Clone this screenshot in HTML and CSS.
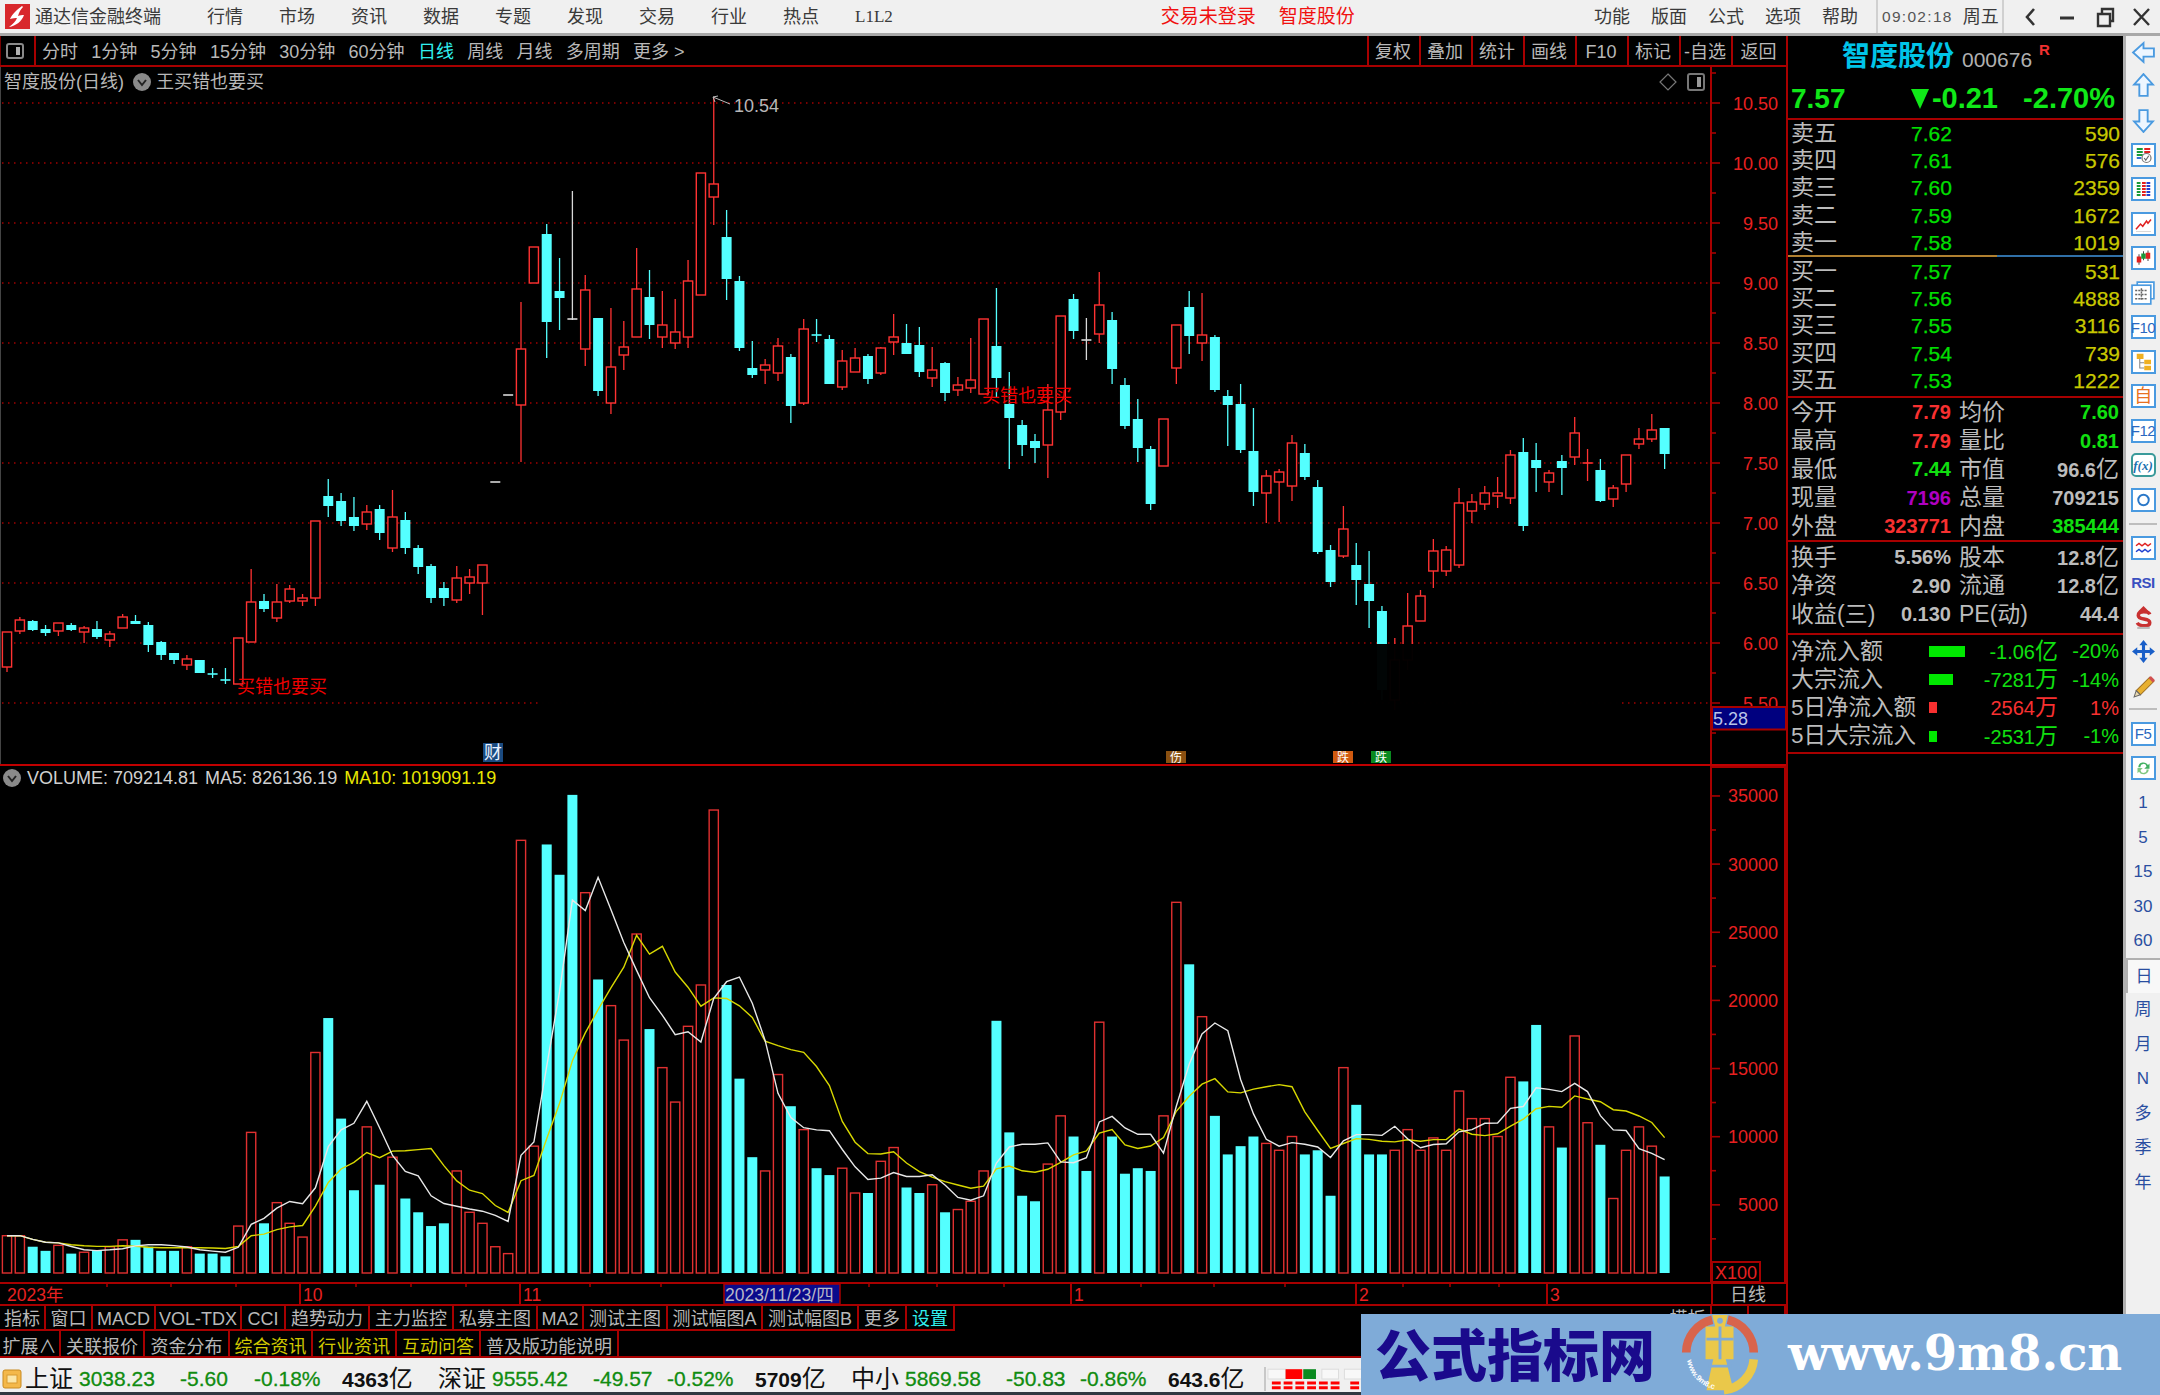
FILE: index.html
```html
<!DOCTYPE html>
<html lang="zh-CN">
<head>
<meta charset="utf-8">
<title>通达信金融终端</title>
<link rel="stylesheet" href="styles.css">
</head>
<body>
<div class="app">
  <header class="menubar">
    <svg class="logo" viewBox="0 0 25 25"><rect width="25" height="25" fill="#d8282c"/><path d="M17 2C13 5 7 10 5 15c3-1 5-1 7-1-1 3-4 6-8 9 7-1 13-6 15-12-2 0-4 0-6 1 1-4 3-7 5-9z" fill="#fff"/></svg>
    <span class="apptitle">通达信金融终端</span>
    <nav class="menu">
      <span>行情</span><span>市场</span><span>资讯</span><span>数据</span><span>专题</span><span>发现</span><span>交易</span><span>行业</span><span>热点</span><span class="l1">L1L2</span>
    </nav>
    <span class="alert first">交易未登录</span>
    <span class="alert">智度股份</span>
    <nav class="menu right">
      <span>功能</span><span>版面</span><span>公式</span><span>选项</span><span>帮助</span>
    </nav>
    <div class="clock"><span class="time">09:02:18</span><span>周五</span></div>
    <div class="winbtns">
      <svg viewBox="0 0 37 30"><path d="M22 7l-7 8 7 8" fill="none" stroke="#333" stroke-width="2.6"/></svg>
      <svg viewBox="0 0 37 30"><path d="M11 16h14" stroke="#333" stroke-width="3"/></svg>
      <svg viewBox="0 0 37 30"><path d="M12 12h12v12H12zM16 12V7h11v12h-3" fill="none" stroke="#333" stroke-width="2.4"/></svg>
      <svg viewBox="0 0 37 30"><path d="M11 7l15 16M26 7L11 23" fill="none" stroke="#333" stroke-width="2.4"/></svg>
    </div>
  </header>

  <div class="work">
    <main class="main">
      <div class="toolbar">
        <div class="tb-icon"><svg viewBox="0 0 18 18"><rect x="1" y="2" width="16" height="14" rx="2" fill="none" stroke="#8a8a8a" stroke-width="2"/><rect x="10" y="5" width="4" height="8" fill="#b0b0b0"/></svg></div>
        <div class="periods">
          <span>分时</span><span>1分钟</span><span>5分钟</span><span>15分钟</span><span>30分钟</span><span>60分钟</span><span class="on">日线</span><span>周线</span><span>月线</span><span>多周期</span><span>更多 &gt;</span>
        </div>
        <div class="tools">
          <span>复权</span><span>叠加</span><span>统计</span><span>画线</span><span>F10</span><span>标记</span><span>-自选</span><span class="last">返回</span>
        </div>
      </div>

      <section class="pane pricepane">
        <svg id="priceChart" class="chart" viewBox="0 67 1786 697"></svg>
        <div class="panehead">
          <span>智度股份(日线)</span>
          <i class="chev"><svg viewBox="0 0 18 18"><circle cx="9" cy="9" r="9" fill="#8a8a8a"/><path d="M5 7l4 5 4-5" fill="none" stroke="#222" stroke-width="2"/></svg></i>
          <span>王买错也要买</span>
        </div>
        <div class="paneicons">
          <svg viewBox="0 0 18 18"><path d="M9 1l8 8-8 8-8-8z" fill="none" stroke="#777" stroke-width="1.2"/></svg>
          <svg viewBox="0 0 18 18"><rect x="1" y="1" width="16" height="16" rx="2" fill="none" stroke="#777" stroke-width="2"/><rect x="10" y="4" width="4" height="10" fill="#999"/></svg>
        </div>
      </section>

      <section class="pane volpane">
        <svg id="volChart" class="chart" viewBox="0 766 1786 516"></svg>
        <div class="volhead">
          <i class="chev small"><svg viewBox="0 0 18 18"><circle cx="9" cy="9" r="9" fill="#8a8a8a"/><path d="M5 7l4 5 4-5" fill="none" stroke="#222" stroke-width="2"/></svg></i>
          <span>VOLUME: 709214.81</span>
          <span>MA5: 826136.19</span>
          <span class="ma10">MA10: 1019091.19</span>
        </div>
      </section>

      <div class="dateaxis">
        <svg id="dateChart" class="datesvg" viewBox="0 1284 1711 20"></svg>
        <span class="datecell">日线</span>
      </div>

      <div class="tabrow rowa">
        <div class="tabs tabs-a">
          <span>指标</span><span>窗口</span><span>MACD</span><span>VOL-TDX</span><span>CCI</span><span>趋势动力</span><span>主力监控</span><span>私募主图</span><span>MA2</span><span>测试主图</span><span>测试幅图A</span><span>测试幅图B</span><span>更多</span><span class="set">设置</span>
        </div>
        <div class="tabs tabs-r"><span>模板</span><span>+</span><span>-</span></div>
      </div>
      <div class="tabrow rowb">
        <div class="tabs tabs-b">
          <span>扩展∧</span><span>关联报价</span><span>资金分布</span><span class="gold">综合资讯</span><span class="gold">行业资讯</span><span class="gold">互动问答</span><span>普及版功能说明</span>
        </div>
      </div>
    </main>

    <aside class="quote">
      <div class="q-title"><span class="q-name">智度股份</span><span class="q-code">000676</span><sup class="q-r">R</sup></div>
      <div class="q-price">
        <span class="q-last">7.57</span>
        <span class="q-tri"></span>
        <span class="q-chg">-0.21</span>
        <span class="q-pct">-2.70%</span>
      </div>
      <div class="book">
        <div class="brow"><span>卖五</span><b>7.62</b><em>590</em></div>
        <div class="brow"><span>卖四</span><b>7.61</b><em>576</em></div>
        <div class="brow"><span>卖三</span><b>7.60</b><em>2359</em></div>
        <div class="brow"><span>卖二</span><b>7.59</b><em>1672</em></div>
        <div class="brow"><span>卖一</span><b>7.58</b><em>1019</em></div>
      </div>
      <div class="bookline"></div>
      <div class="book buy">
        <div class="brow"><span>买一</span><b>7.57</b><em>531</em></div>
        <div class="brow"><span>买二</span><b>7.56</b><em>4888</em></div>
        <div class="brow"><span>买三</span><b>7.55</b><em>3116</em></div>
        <div class="brow"><span>买四</span><b>7.54</b><em>739</em></div>
        <div class="brow"><span>买五</span><b>7.53</b><em>1222</em></div>
      </div>
      <div class="stats s-a">
        <div class="srow"><div class="pair"><span>今开</span><b class="up">7.79</b></div><div class="pair"><span>均价</span><b class="dn">7.60</b></div></div>
        <div class="srow"><div class="pair"><span>最高</span><b class="up">7.79</b></div><div class="pair"><span>量比</span><b class="dn">0.81</b></div></div>
        <div class="srow"><div class="pair"><span>最低</span><b class="dn">7.44</b></div><div class="pair"><span>市值</span><b class="ne">96.6<u>亿</u></b></div></div>
        <div class="srow"><div class="pair"><span>现量</span><b class="pu">7196</b></div><div class="pair"><span>总量</span><b class="ne">709215</b></div></div>
        <div class="srow"><div class="pair"><span>外盘</span><b class="up">323771</b></div><div class="pair"><span>内盘</span><b class="dn">385444</b></div></div>
      </div>
      <div class="stats s-b">
        <div class="srow"><div class="pair"><span>换手</span><b class="ne">5.56%</b></div><div class="pair"><span>股本</span><b class="ne">12.8<u>亿</u></b></div></div>
        <div class="srow"><div class="pair"><span>净资</span><b class="ne">2.90</b></div><div class="pair"><span>流通</span><b class="ne">12.8<u>亿</u></b></div></div>
        <div class="srow"><div class="pair"><span>收益(三)</span><b class="ne">0.130</b></div><div class="pair"><span>PE(动)</span><b class="ne">44.4</b></div></div>
      </div>
      <div class="flows">
        <div class="frow"><span>净流入额</span><i class="bar g" style="width:36px"></i><b class="dn">-1.06<u>亿</u></b><em class="dn">-20%</em></div>
        <div class="frow"><span>大宗流入</span><i class="bar g" style="width:24px"></i><b class="dn">-7281<u>万</u></b><em class="dn">-14%</em></div>
        <div class="frow"><span class="tight">5日净流入额</span><i class="bar r" style="width:8px"></i><b class="up">2564<u>万</u></b><em class="up">1%</em></div>
        <div class="frow"><span class="tight">5日大宗流入</span><i class="bar g" style="width:8px"></i><b class="dn">-2531<u>万</u></b><em class="dn">-1%</em></div>
      </div>
    </aside>

    <nav class="side">
      <div class="si"><svg class="ar" viewBox="0 0 24 24"><path d="M2 12l10-9v5h10v8H12v5z" fill="#eef6ff" stroke="#4a9ae0" stroke-width="1.8"/></svg></div>
      <div class="si"><svg class="ar" viewBox="0 0 24 24"><path d="M12 1l9 10h-5v11H8V11H3z" fill="#eef6ff" stroke="#4a9ae0" stroke-width="1.8"/></svg></div>
      <div class="si"><svg class="ar" viewBox="0 0 24 24"><path d="M12 23l9-10h-5V2H8v11H3z" fill="#eef6ff" stroke="#4a9ae0" stroke-width="1.8"/></svg></div>
      <div class="si"><svg class="bx" viewBox="0 0 24 24"><path d="M3 4h8M3 8h8M3 12h8" stroke="#1a9a3a" stroke-width="2.400"/><path d="M13 4h8M13 8h8" stroke="#e02020" stroke-width="2.400"/><path d="M3 16h6" stroke="#2060d0" stroke-width="2.400"/><circle cx="16" cy="16" r="6" fill="#fff" stroke="#777" stroke-width="1.6"/><path d="M13 16l2 3 4-6" fill="none" stroke="#666" stroke-width="1.6"/></svg></div>
      <div class="si"><svg class="bx" viewBox="0 0 24 24"><path d="M3 4h5M3 8h5M3 12h5M3 16h5M3 20h5" stroke="#1a9a3a" stroke-width="2.400"/><path d="M10 4h5M10 8h5M10 12h5M10 16h5M10 20h5" stroke="#e02020" stroke-width="2.400"/><path d="M16 4h5M16 8h5M16 12h5M16 16h5M16 20h5" stroke="#2040d0" stroke-width="2.400"/></svg></div>
      <div class="si"><svg class="bx" viewBox="0 0 24 24"><path d="M2 19l6-7 3 3 5-7 2 3 4-5" fill="none" stroke="#e02020" stroke-width="2"/><path d="M2 22h20" stroke="#ccc" stroke-width="1"/></svg></div>
      <div class="si"><svg class="bx" viewBox="0 0 24 24"><path d="M6 7v14M12 3v12M18 2v14" stroke="#333" stroke-width="1.200"/><rect x="3" y="10" width="6" height="8" fill="#e02020"/><rect x="9" y="6" width="6" height="7" fill="#1a9a3a"/><rect x="15" y="5" width="6" height="8" fill="#e02020"/></svg></div>
      <div class="si"><svg class="ar" viewBox="0 0 24 24"><path d="M6 5V2h16v16h-3" fill="#fff" stroke="#4a9ae0" stroke-width="1.6"/><rect x="1" y="5" width="18" height="18" fill="#fff" stroke="#4a9ae0" stroke-width="1.6"/><path d="M4 10h12M4 14h12M4 18h12M10 8v12" stroke="#666" stroke-width="1.4" stroke-dasharray="2 1"/></svg></div>
      <div class="si"><span class="bx txt">F10</span></div>
      <div class="si"><svg class="bx" viewBox="0 0 24 24"><path d="M7 7v13h6M7 13h6" fill="none" stroke="#888" stroke-width="1.4"/><rect x="3" y="1" width="9" height="7" fill="#f0b020"/><rect x="13" y="9" width="9" height="6" fill="#f0b020"/><rect x="13" y="17" width="9" height="6" fill="#f0b020"/></svg></div>
      <div class="si"><span class="bx txt zi">自</span></div>
      <div class="si"><span class="bx txt">F12</span></div>
      <div class="si"><span class="bx fx">f(x)</span></div>
      <div class="si"><svg class="bx" viewBox="0 0 24 24"><circle cx="12" cy="12" r="7" fill="none" stroke="#2a78c8" stroke-width="2.600"/></svg></div>
      <hr class="sep">
      <div class="si"><svg class="bx" viewBox="0 0 24 24"><path d="M2 9l4-3 4 3 4-3 4 3 4-3" fill="none" stroke="#e02020" stroke-width="2"/><path d="M2 17l4-3 4 3 4-3 4 3 4-3" fill="none" stroke="#2040d0" stroke-width="2"/></svg></div>
      <div class="si rsi">RSI</div>
      <div class="si"><svg class="ar" viewBox="0 0 24 24"><path d="M18 9c-1-3-11-4-11 1 0 5 11 2 11 7 0 4-10 4-12 0" fill="none" stroke="#c83030" stroke-width="3.4"/><path d="M12 1l5 5H7z" fill="#c83030"/><path d="M6 22h12" stroke="#bbb" stroke-width="2"/></svg></div>
      <div class="si"><svg class="ar" viewBox="0 0 24 24"><path d="M12 1l4 5h-2.500v4.500H18V8l5 4-5 4v-2.500h-4.500V18H16l-4 5-4-5h2.500v-4.500H6V16l-5-4 5-4v2.500h4.500V6H8z" fill="#1a5fc8"/></svg></div>
      <div class="si"><svg class="ar" viewBox="0 0 24 24"><path d="M5 16L18 3l4 4L9 20z" fill="#e8b030" stroke="#a07020" stroke-width="1"/><path d="M5 16l4 4-6 2z" fill="#e8d8b0" stroke="#666" stroke-width="1"/><path d="M18 3l4 4" stroke="#d05050" stroke-width="3"/></svg></div>
      <hr class="sep two">
      <div class="si"><span class="bx txt">F5</span></div>
      <div class="si"><svg class="bx" viewBox="0 0 24 24"><path d="M5 11a7 7 0 0 1 13-3l2-2v7h-7l3-3a4 4 0 0 0-8 1z" fill="#40b060"/><path d="M19 14a7 7 0 0 1-13 3l-2 2v-7h7l-3 3a4 4 0 0 0 8-1z" fill="#80c880"/></svg></div>
      <div class="sn">1</div><div class="sn">5</div><div class="sn">15</div><div class="sn">30</div><div class="sn">60</div>
      <div class="sn day">日</div>
      <div class="sn">周</div><div class="sn">月</div><div class="sn">N</div><div class="sn">多</div><div class="sn">季</div><div class="sn">年</div>
    </nav>
  </div>

  <footer class="status">
    <svg class="st-icon" viewBox="0 0 20 20"><rect x="1" y="1" width="18" height="18" rx="2" fill="#f4b84a" stroke="#c88a20"/><rect x="5" y="6" width="10" height="8" fill="#fbe6a8" stroke="#d89a30"/></svg>
    <div class="idx"><span class="nm">上证</span><b>3038.23</b><b>-5.60</b><b>-0.18%</b><strong>4363<u>亿</u></strong></div>
    <div class="idx"><span class="nm">深证</span><b>9555.42</b><b>-49.57</b><b>-0.52%</b><strong>5709<u>亿</u></strong></div>
    <div class="idx"><span class="nm">中小</span><b>5869.58</b><b>-50.83</b><b>-0.86%</b><strong>643.6<u>亿</u></strong></div>
    <svg class="st-meter" viewBox="0 0 100 24">
      <rect x="2" y="2" width="18" height="10" fill="#f8f8f8" stroke="#ddd"/><rect x="20" y="2" width="17" height="10" fill="#f00"/><rect x="38" y="2" width="13" height="10" fill="#0a8a20"/><rect x="57" y="2" width="17" height="10" fill="#f8f8f8" stroke="#ddd"/><rect x="80" y="2" width="18" height="10" fill="#f8f8f8" stroke="#ddd"/>
      <path d="M6 16h70M86 16h14M6 21h70M86 21h14" stroke="#f00" stroke-width="3" stroke-dasharray="9 3"/>
    </svg>
  </footer>

  <div class="watermark">
    <span class="wm-cn">公式指标网</span>
    <svg class="wm-logo" viewBox="0 0 84 84">
      <defs><path id="wmarc" d="M8 48 A36 36 0 0 0 36 78"/></defs>
      <path d="M7 40A35 35 0 0 1 34 6" fill="none" stroke="#d8644c" stroke-width="9"/>
      <path d="M50 6A35 35 0 0 1 77 40" fill="none" stroke="#d8644c" stroke-width="9"/>
      <path d="M77 47A35 35 0 0 1 46 79" fill="none" stroke="#eac84a" stroke-width="9"/>
      <path d="M34 1h16l-3 12h9v34h-8l8 32H28l7-32h-8V13h10z" fill="#eac84a"/>
      <path d="M28 26h28M42 13v34M30 54h24" stroke="#7fabd8" stroke-width="3"/>
      <circle cx="42" cy="7" r="3" fill="#7fabd8"/>
      <text class="wm-arc"><textPath href="#wmarc">www.9m8.cn</textPath></text>
    </svg>
    <span class="wm-url">www.9m8.cn</span>
  </div>
</div>
<script src="chart.js"></script>
</body>
</html>
```
FILE: styles.css
```css
* { box-sizing: border-box; margin: 0; padding: 0; }
html, body { width: 2160px; height: 1395px; background: #000; overflow: hidden; }
body { font-family: "Liberation Sans", "Noto Sans CJK SC", sans-serif; font-size: 18px; line-height: 1; }
i, em, u, b { font-style: normal; text-decoration: none; }

.app { position: relative; width: 2160px; height: 1395px; display: flex; flex-direction: column; overflow: hidden; }

/* menu bar */
.menubar { height: 36px; flex: none; display: flex; align-items: center; background: #f0f0f0; border-bottom: 3px solid #a8a8a8; color: #3a3a3a; padding-left: 5px; }
.logo { width: 25px; height: 25px; flex: none; }
.apptitle { margin-left: 5px; width: 126px; }
.menu { display: flex; gap: 36px; margin-left: 46px; }
.menu .l1 { font-family: "Liberation Serif", serif; font-size: 17px; }
.menu.right { margin-left: auto; gap: 21px; margin-right: 18px; }
.alert { color: #f01010; font-size: 19px; white-space: nowrap; }
.alert.first { margin-left: 268px; margin-right: 23px; }
.clock { width: 128px; height: 33px; flex: none; display: flex; align-items: center; gap: 10px; padding-left: 4px; border-left: 2px solid #d0d0d0; border-right: 2px solid #d0d0d0; white-space: nowrap; }
.time { font-size: 15.500px; letter-spacing: 1.300px; color: #555; }
.winbtns { display: flex; margin-left: 8px; }
.winbtns svg { width: 37px; height: 30px; }

/* layout */
.work { flex: none; height: 1322px; display: flex; background: #000; }
.main { width: 1786px; flex: none; display: flex; flex-direction: column; }

/* toolbar */
.toolbar { height: 31px; flex: none; display: flex; align-items: stretch; border-bottom: 2px solid #a80000; color: #b8b8b8; }
.tb-icon { width: 36px; flex: none; display: flex; align-items: center; justify-content: center; border-right: 2px solid #a80000; border-left: 1px solid #700; padding-right: 6px; }
.tb-icon svg { width: 18px; height: 18px; }
.periods { display: flex; align-items: center; gap: 13.300px; padding: 2px 0 0 6px; }
.periods .on { color: #30f0f0; }
.tools { margin-left: auto; display: flex; }
.tools span { width: 52px; display: flex; align-items: center; justify-content: center; border-left: 2px solid #a80000; padding: 2px 2px 0 0; }
.tools .last { width: 55px; }

/* panes */
.pane { position: relative; flex: none; }
.chart { display: block; width: 1786px; height: 100%; }
.pricepane { height: 699px; border-bottom: 2px solid #c00000; }
.volpane { height: 516px; }
.panehead { position: absolute; left: 4px; top: 6px; display: flex; align-items: center; gap: 5px; color: #b8b8b8; }
.chev { display: block; width: 18px; height: 18px; margin-left: 4px; }
.chev.small { margin-left: 0; }
.chev svg { display: block; width: 100%; height: 100%; }
.paneicons { position: absolute; left: 1659px; top: 6px; display: flex; gap: 10px; }
.paneicons svg { width: 18px; height: 18px; display: block; }
.volhead { position: absolute; left: 3px; top: 3px; display: flex; align-items: center; gap: 7px; color: #d0d0d0; font-size: 18px; }
.volhead .chev { margin-right: -1px; }
.ma10 { color: #e8e800; }

/* date axis */
.dateaxis { flex: none; height: 24px; display: flex; border-top: 2px solid #a80000; border-bottom: 2px solid #a80000; }
.datesvg { display: block; width: 1711px; height: 20px; flex: none; overflow: visible; }
.datecell { width: 75px; border-left: 2px solid #a80000; color: #b8b8b8; display: flex; align-items: center; justify-content: center; padding: 2px 3px 0 0; }

/* tabs */
.tabrow { flex: none; display: flex; justify-content: space-between; }
.rowa { height: 25px; }
.rowb { height: 27px; border-bottom: 2px solid #a80000; }
.tabs { display: grid; color: #b8b8b8; }
.tabs span { display: flex; align-items: center; justify-content: center; border-right: 2px solid #a80000; border-bottom: 2px solid #a80000; white-space: nowrap; padding-top: 3px; }
.rowb .tabs span { border-bottom: 0; padding-top: 7px; }
.tabs-a { grid-template-columns: 46px 47px 63px 86px 44px 84px 84px 84px 46px 84px 95px 96px 48px 48px; }
.tabs-b { grid-template-columns: 61px 84px 85px 83px 84px 84px 138px; }
.tabs-r { grid-template-columns: 47px 37px 37px; margin-right: 0; }
.tabs .set { color: #30f0f0; }
.tabs .gold { color: #d0c800; }

/* quote */
.quote { width: 337px; flex: none; border-left: 2px solid #a80000; color: #bcbcbc; display: flex; flex-direction: column; padding-left: 3px; }
.quote > * { margin-left: -3px; padding-left: 3px; }
.q-title { height: 49px; flex: none; display: flex; align-items: flex-start; padding-left: 54px !important; }
.q-name { margin-top: 3px; font-size: 28px; line-height: 36px; color: #00c4e8; font-weight: 700; }
.q-code { margin: 13px 0 0 8px; font-size: 21px; color: #b0b0b0; }
.q-r { margin: 6px 0 0 7px; font-size: 15px; font-weight: 700; color: #f03030; }
.q-price { height: 35px; flex: none; border-bottom: 2px solid #a80000; display: flex; align-items: center; color: #10e818; font-weight: 700; font-size: 29px; padding-bottom: 6px; }
.q-last { width: 120px; font-size: 28px; }
.q-tri { width: 0; height: 0; border-left: 9px solid transparent; border-right: 9px solid transparent; border-top: 20px solid #10e818; }
.q-chg { width: 69px; text-align: right; }
.q-pct { width: 117px; text-align: right; }
.book { flex: none; height: 135px; }
.buy { height: 141px; border-bottom: 2px solid #a80000; padding-top: 1px; }
.brow { height: 27.200px; display: grid; grid-template-columns: 120px 1fr 120px; align-items: center; padding-right: 3px; font-size: 23px; }
.brow b { font-weight: 400; font-size: 21px; color: #00e000; -webkit-text-stroke: .25px #00e000; }
.brow em { font-size: 21px; color: #c8c800; text-align: right; -webkit-text-stroke: .25px #c8c800; }
.bookline { flex: none; height: 2px; margin-left: -3px; padding: 0; background: linear-gradient(90deg, #b08030 0 62.500%, #3070a8 62.500% 100%); }

.stats { flex: none; border-bottom: 2px solid #a80000; padding-right: 3px; }
.s-a { height: 144px; }
.s-b { height: 93px; padding-top: 1px; }
.srow { height: 28.500px; display: flex; gap: 8px; }
.pair { width: 160px; display: flex; justify-content: space-between; align-items: center; font-size: 23px; white-space: nowrap; }
.pair b { font-size: 20px; font-weight: 700; }
.pair b u, .frow b u { font-size: 23px; font-weight: 400; }
.up { color: #f83030; }
.dn { color: #10e010; }
.ne { color: #bcbcbc; }
.pu { color: #b000c0; }

.flows { flex: none; height: 119px; border-bottom: 2px solid #a80000; padding-top: 2px; padding-right: 3px; }
.frow { height: 28.400px; display: grid; grid-template-columns: 138px 40px 89px 61px; align-items: center; font-size: 23px; white-space: nowrap; }
.frow .tight { font-size: 22.500px; }
.frow b { font-size: 20px; font-weight: 400; text-align: right; }
.frow em { font-size: 20px; text-align: right; }
.bar { display: block; height: 11px; }
.bar.g { background: #00e800; }
.bar.r { background: #f83030; }

/* sidebar */
.side { width: 37px; flex: none; background: #f0f0f0; border-left: 3px solid #b0b0b0; display: flex; flex-direction: column; align-items: center; color: #2a4ea0; }
.si { height: 34.500px; width: 100%; flex: none; display: flex; align-items: center; justify-content: center; }
.si:first-child { height: 32.500px; }
.ar { width: 25px; height: 25px; display: block; }
.bx { width: 25px; height: 24px; display: flex; align-items: center; justify-content: center; border: 2px solid #4a9ae0; background: #fff; padding: 1px; }
.txt { font-weight: 400; font-size: 15px; color: #2a68c0; letter-spacing: -.5px; }
.zi { color: #e87020; font-size: 18px; }
.fx { font-family: "Liberation Serif", serif; font-style: italic; font-size: 13px; color: #1a70b0; font-weight: 700; border-color: #3a9a9a; border-radius: 5px; }
.rsi { font-weight: 700; font-size: 15px; color: #3a50c0; letter-spacing: -.5px; }
.sep { flex: none; width: 28px; height: 2px; border: 0; background: #bdbdbd; margin: 6px 0; }
.sep.two { margin: 4px 0 7px; }
.sn { height: 34.500px; width: 100%; flex: none; display: flex; align-items: center; justify-content: center; font-size: 17px; }
.sn.day { background: #f8f8f8; border-top: 2px solid #b0b0b0; border-left: 2px solid #b0b0b0; }

/* status */
.status { flex: 1; display: flex; align-items: center; background: #f0f0f0; border-bottom: 3px solid #303840; padding: 7px 0 0 2px; color: #111; }
.st-icon { width: 20px; height: 20px; flex: none; margin-right: 3px; }
.idx { width: 413px; flex: none; display: grid; grid-template-columns: 54px 101px 74px 88px auto; align-items: center; font-size: 24px; white-space: nowrap; }
.idx b { font-size: 21px; color: #108c10; font-weight: 400; -webkit-text-stroke: .3px #108c10; }
.idx strong { font-size: 21px; font-weight: 700; }
.idx strong u { font-size: 24px; font-weight: 400; }
.st-meter { width: 100px; height: 24px; flex: none; border-left: 2px solid #c8c8c8; }

/* watermark */
.watermark { position: absolute; left: 1361px; top: 1314px; width: 799px; height: 81px; background: #7fabd8; display: flex; align-items: center; }
.wm-cn { margin: -6px 0 0 14px; font-family: "Noto Sans CJK SC", sans-serif; font-weight: 900; font-size: 56px; line-height: 60px; color: #1a0a8c; white-space: nowrap; }
.wm-logo { position: absolute; left: 317px; top: 0; width: 84px; height: 81px; }
.wm-arc { font-family: "Liberation Sans", sans-serif; font-size: 8px; font-weight: 700; fill: #fff; }
.wm-url { position: absolute; left: 427px; top: 9px; font-family: "DejaVu Serif", serif; font-weight: 700; font-size: 48px; line-height: 60px; color: #fff; white-space: nowrap; }
```
FILE: chart.js
```js
var RED = '#ff3232', CYAN = '#54ffff', LINE = '#a80000', DOT = '#a00000';
var AXIS_X = 1711;
function cx(i) { return 7 + 12.85 * i; }
function py(p) { return 643 - (p - 6) * 120; }

// type, body top, body bottom, high, low (y in page pixels)
var K = [
['r',632,667,632,672],['r',620,631,617,634],['c',621,630,620,631],['c',629,633,625,636],['r',623,631,623,636],
['c',625,630,623,631],['r',628,632,626,643],['c',629,637,621,639],['r',634,640,631,647],['r',617,628,614,628],
['c',621,624,615,624],['c',625,645,622,652],['c',642,655,641,660],['c',653,660,653,664],['r',659,665,655,670],
['c',660,673,660,673],['x',674,674,668,678],['x',680,680,668,684],['r',638,684,638,684],['r',602,642,569,642],
['c',601,609,594,612],['r',602,618,584,622],['r',589,601,585,603],['r',598,601,594,606],['r',521,598,521,606],
['c',496,506,479,517],['c',501,521,493,526],['c',517,526,497,531],['r',512,524,505,530],['c',509,533,505,540],
['r',517,548,490,552],['c',520,548,512,554],['c',548,567,545,574],['c',566,598,564,603],['c',588,598,582,606],
['r',578,600,566,603],['r',577,583,569,594],['r',565,583,565,615],['w',482,482,482,482],['w',395,395,395,395],
['r',349,405,302,462],['r',247,283,247,283],['c',234,322,224,358],['c',291,298,258,330],['w',319,319,191,320],
['r',290,349,275,366],['c',318,391,318,396],['r',367,403,308,414],['r',347,355,321,370],['r',289,337,248,337],
['c',297,325,270,339],['r',325,337,291,348],['r',332,343,299,349],['r',281,337,260,348],['r',173,295,173,295],
['r',184,197,97,225],['c',237,279,210,300],['c',281,348,276,351],['c',368,375,341,378],['r',365,370,359,384],
['r',346,373,338,381],['c',357,406,354,423],['r',329,403,319,405],['x',335,335,319,342],['c',339,384,335,384],
['r',361,387,350,390],['r',358,372,348,372],['c',356,379,354,384],['r',348,373,347,375],['r',337,342,314,355],
['c',343,354,324,354],['c',345,372,327,377],['r',370,378,347,387],['c',363,393,362,401],['r',385,390,377,396],
['r',380,388,338,393],['r',319,394,319,394],['c',346,378,288,397],['c',404,418,372,469],['c',425,445,420,456],
['c',441,448,434,463],['r',410,445,384,478],['r',316,412,316,420],['c',299,331,294,339],['w',340,340,318,360],
['r',305,334,272,343],['c',320,369,312,384],['c',385,426,378,429],['c',419,448,399,462],['c',449,504,446,510],
['r',419,466,419,466],['r',325,368,325,384],['c',307,336,291,354],['r',335,343,293,361],['c',337,390,335,392],
['c',396,405,390,446],['c',404,450,384,453],['c',451,492,408,506],['r',476,493,470,523],['r',472,482,469,522],
['r',443,486,435,501],['c',453,477,444,480],['c',487,552,480,554],['c',550,582,545,587],['r',529,556,506,558],
['c',565,580,543,605],['c',584,601,551,628],['c',611,690,606,700],['r',660,700,638,710],['r',626,660,593,670],
['r',596,621,590,621],['r',551,571,539,588],['r',550,571,546,576],['r',503,565,488,568],['r',502,511,494,523],
['r',493,504,486,510],['r',493,496,477,508],['r',455,498,450,504],['c',452,526,438,531],['c',460,468,443,492],
['r',473,482,470,492],['c',461,468,455,495],['r',433,457,417,465],['y',463,463,449,481],['c',470,501,459,502],
['r',488,499,485,507],['r',455,484,455,492],['r',439,444,428,449],['r',430,439,414,442],['c',428,454,428,469]
];

var VT = 'rrccrcrcrr' + 'ccccrcccrr' + 'crrrrcccrc' + 'rccccrrrrr' + 'rrcccrcrrr' + 'crrrrrcccr' + 'rcrccrrcrr' +
         'ccrcrrrccc' + 'crrccrcccc' + 'rrcrccccrr' + 'rcccrcccrr' + 'rrrrrrrrcc' + 'rcrrcrrrrc';
// volume bar tops, in the y of the shrunk reference
var VR = [897,897,905,908,904,910,909,908,905,900, 900,905,908,908,905,910,910,912,890,822,
          888,873,888,898,764,739,812,864,818,860, 840,870,880,890,888,850,880,888,905,910,
          610,832,613,635,577,648,711,730,755,678, 747,775,800,745,715,588,715,783,840,850,
          780,803,820,848,853,848,866,866,843,833, 862,866,860,880,878,872,850,741,822,868,
          872,845,810,825,850,742,825,852,848,850, 810,655,700,738,810,838,832,825,830,835,
          825,838,835,868,775,802,838,838,835,820, 835,826,835,792,812,812,825,782,785,744,
          818,833,752,815,831,870,835,818,832,854];

function tx(x, y, s, fill, extra) {
  return '<text x="' + x + '" y="' + y + '" fill="' + fill + '" ' + (extra || '') + '>' + s + '</text>';
}
function ln(x1, y1, x2, y2, c, w) {
  return '<line x1="' + x1 + '" y1="' + y1 + '" x2="' + x2 + '" y2="' + y2 + '" stroke="' + c + '" stroke-width="' + (w || 1.3) + '"/>';
}

function drawPrice() {
  var s = '<g font-family="Liberation Sans, Noto Sans CJK SC, sans-serif" font-size="18">';
  var p, y;
  s += ln(0.5, 67, 0.5, 764, '#444', 1);
  for (p = 10.5; p >= 5.5; p -= 0.5) {
    y = py(p);
    s += ln(2, y, AXIS_X, y, DOT, 1.4).replace('/>', ' stroke-dasharray="1.500 4.500"/>');
  }
  K.forEach(function (k, i) {
    var x = cx(i), t = k[0], c = (t === 'r' || t === 'y') ? RED : t === 'w' ? '#d8d8d8' : CYAN;
    if (k[3] < k[1]) s += ln(x, k[3], x, k[1], c);
    if (k[4] > k[2]) s += ln(x, k[2], x, k[4], c);
    if (t === 'x' || t === 'y' || t === 'w') s += ln(x - 5, k[1], x + 5, k[1], c, 1.6);
    else if (t === 'r') s += '<rect x="' + (x - 4.6) + '" y="' + k[1] + '" width="9.2" height="' + (k[2] - k[1]) + '" fill="#000" stroke="' + c + '" stroke-width="1.4"/>';
    else s += '<rect x="' + (x - 5) + '" y="' + k[1] + '" width="10" height="' + (k[2] - k[1]) + '" fill="' + c + '"/>';
  });
  s += tx(237, 693, '买错也要买', '#f00000');
  s += tx(982, 402, '买错也要买', '#f00000');
  s += '<path d="M713 97l17 7M713 97l5-1M713 97l2 5" stroke="#bbb" stroke-width="1" fill="none"/>';
  s += tx(734, 112, '10.54', '#b8b8b8');
  // blacked-out band at the foot of the price pane
  s += '<rect x="538" y="644" width="1083" height="107" fill="#000" opacity=".98"/>';
  // corporate-event markers
  s += '<rect x="483" y="743" width="20" height="19" fill="#1a4a80"/>' + tx(484, 759, '财', '#e8f0ff');
  [[1166, '#8a5010', '伤'], [1333, '#d05a10', '跌'], [1371, '#0a8a20', '跌']].forEach(function (m) {
    s += '<rect x="' + m[0] + '" y="751" width="20" height="12" fill="' + m[1] + '"/>' +
         '<text x="' + (m[0] + 4) + '" y="761.500" font-size="12" fill="#fff">' + m[2] + '</text>';
  });
  // price axis
  s += ln(AXIS_X, 67, AXIS_X, 764, LINE, 2);
  for (p = 10.75; p >= 5.24; p -= 0.25) {
    y = py(p);
    var major = Math.abs(p * 2 - Math.round(p * 2)) < 0.01;
    s += ln(AXIS_X, y, AXIS_X + (major ? 9 : 5), y, LINE, 1.6);
    if (major && p <= 10.5) s += tx(1778, y + 6.500, p.toFixed(2), '#e82020', 'text-anchor="end"');
  }
  s += '<rect x="1712" y="707" width="74" height="22.500" fill="#00007f" stroke="' + LINE + '" stroke-width="2"/>';
  s += tx(1713, 725, '5.28', '#b8c4e8');
  s += '</g>';
  document.getElementById('priceChart').innerHTML = s;
}

function drawVolume() {
  var base = 1273, s = '<g font-family="Liberation Sans, sans-serif" font-size="18">';
  var tops = VR.map(function (v) { return v * 1.3776; });
  tops.forEach(function (t, i) {
    var x = cx(i);
    if (VT.charAt(i) === 'r') s += '<rect x="' + (x - 4.6) + '" y="' + t + '" width="9.2" height="' + (base - t) + '" fill="#000" stroke="#e03030" stroke-width="1.4"/>';
    else s += '<rect x="' + (x - 5) + '" y="' + t + '" width="10" height="' + (base - t) + '" fill="' + CYAN + '"/>';
  });
  function ma(n) {
    return tops.map(function (t, i) {
      var from = Math.max(0, i - n + 1), sum = 0, j;
      for (j = from; j <= i; j++) sum += base - tops[j];
      return cx(i).toFixed(1) + ',' + (base - sum / (i - from + 1)).toFixed(1);
    }).join(' ');
  }
  s += '<polyline points="' + ma(10) + '" fill="none" stroke="#d8d800" stroke-width="1.4"/>';
  s += '<polyline points="' + ma(5) + '" fill="none" stroke="#e8e8e8" stroke-width="1.4"/>';
  s += ln(AXIS_X, 766, AXIS_X, 1282, LINE, 2) + ln(AXIS_X, 767, 1785, 767, LINE, 2) + ln(1785, 766, 1785, 1282, LINE, 2);
  for (var v = 35000; v >= 5000; v -= 5000) {
    var y = base - v * 0.01363;
    s += ln(AXIS_X, y, AXIS_X + 9, y, LINE, 1.6);
    s += ln(AXIS_X, y + 34, AXIS_X + 5, y + 34, LINE, 1.6);
    s += tx(1778, y + 6.500, v, '#e82020', 'text-anchor="end"');
  }
  s += '<rect x="1712" y="1262" width="48" height="20" fill="#000" stroke="' + LINE + '" stroke-width="2"/>';
  s += tx(1715, 1279, 'X100', '#e82020');
  s += '</g>';
  document.getElementById('volChart').innerHTML = s;
}

function drawDates() {
  var s = '<g font-family="Liberation Sans, Noto Sans CJK SC, sans-serif" font-size="17.500">';
  [107, 171, 236, 356, 411, 466, 590, 661, 869, 937, 1004, 1141, 1214, 1285, 1403, 1450, 1499].forEach(function (x) {
    s += ln(x, 1284, x, 1287, LINE, 1.5);
  });
  [[7, '2023年', 0], [303, '10', 300], [523, '11', 520], [1074, '1', 1071], [1359, '2', 1356], [1550, '3', 1547]].forEach(function (d) {
    if (d[2]) s += ln(d[2], 1284, d[2], 1304, LINE, 2);
    s += tx(d[0], 1301, d[1], '#e82020');
  });
  s += '<rect x="724" y="1284" width="116" height="20" fill="#0a0a8c" stroke="' + LINE + '" stroke-width="1.5"/>';
  s += tx(725, 1301, '2023/11/23/四', '#b8b8c8');
  s += '</g>';
  document.getElementById('dateChart').innerHTML = s;
}

drawPrice();
drawVolume();
drawDates();
```
